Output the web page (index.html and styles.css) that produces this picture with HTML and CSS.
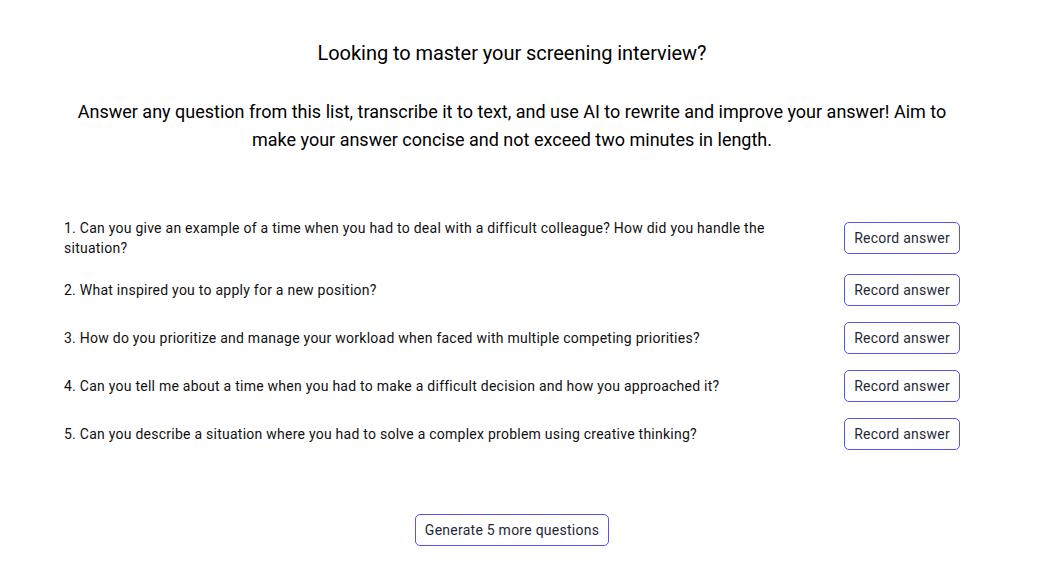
FILE: index.html
```html
<!DOCTYPE html>
<html lang="en">
<head>
<meta charset="utf-8">
<title>Screening interview</title>
<link rel="stylesheet" href="styles.css">
</head>
<body>
<main class="page">
  <h1 class="title">Looking to master your screening interview?</h1>
  <p class="intro">Answer any question from this list, transcribe it to text, and use AI to rewrite and improve your answer! Aim to make your answer concise and not exceed two minutes in length.</p>
  <ul class="questions">
    <li class="question">
      <span class="q-text">1. Can you give an example of a time when you had to deal with a difficult colleague? How did you handle the situation?</span>
      <button class="btn">Record answer</button>
    </li>
    <li class="question">
      <span class="q-text">2. What inspired you to apply for a new position?</span>
      <button class="btn">Record answer</button>
    </li>
    <li class="question">
      <span class="q-text">3. How do you prioritize and manage your workload when faced with multiple competing priorities?</span>
      <button class="btn">Record answer</button>
    </li>
    <li class="question">
      <span class="q-text">4. Can you tell me about a time when you had to make a difficult decision and how you approached it?</span>
      <button class="btn">Record answer</button>
    </li>
    <li class="question">
      <span class="q-text">5. Can you describe a situation where you had to solve a complex problem using creative thinking?</span>
      <button class="btn">Record answer</button>
    </li>
  </ul>
  <div class="more">
    <button class="btn">Generate 5 more questions</button>
  </div>
</main>
</body>
</html>
```
FILE: styles.css
```css
* { box-sizing: border-box; }
html, body { margin: 0; padding: 0; background: #fff; }
body {
  font-family: Roboto, "Noto Sans", sans-serif;
  color: #111;
}
.page {
  width: 1024px;
  padding: 39px 64px 0;
}
.title {
  margin: 0;
  font-size: 20px;
  line-height: 28px;
  font-weight: 400;
  text-align: center;
  color: #000;
  letter-spacing: -0.05px;
}
.intro {
  margin: 31px 0 0;
  font-size: 18px;
  line-height: 28px;
  text-align: center;
  color: #000;
}
.questions {
  list-style: none;
  margin: 64px 0 0;
  padding: 0;
  display: flex;
  flex-direction: column;
  gap: 16px;
}
.question {
  display: flex;
  align-items: center;
  justify-content: space-between;
  gap: 24px;
}
.q-text {
  max-width: 730px;
  font-size: 14px;
  line-height: 20px;
  letter-spacing: 0.25px;
  color: #111;
}
.btn {
  font-family: inherit;
  font-size: 14px;
  line-height: 20px;
  letter-spacing: 0.25px;
  color: #1f2937;
  background: #fff;
  border: 1px solid #5a55e6;
  border-radius: 5px;
  padding: 5px 9px;
  flex-shrink: 0;
}
.more {
  display: flex;
  justify-content: center;
  margin-top: 64px;
}
```
